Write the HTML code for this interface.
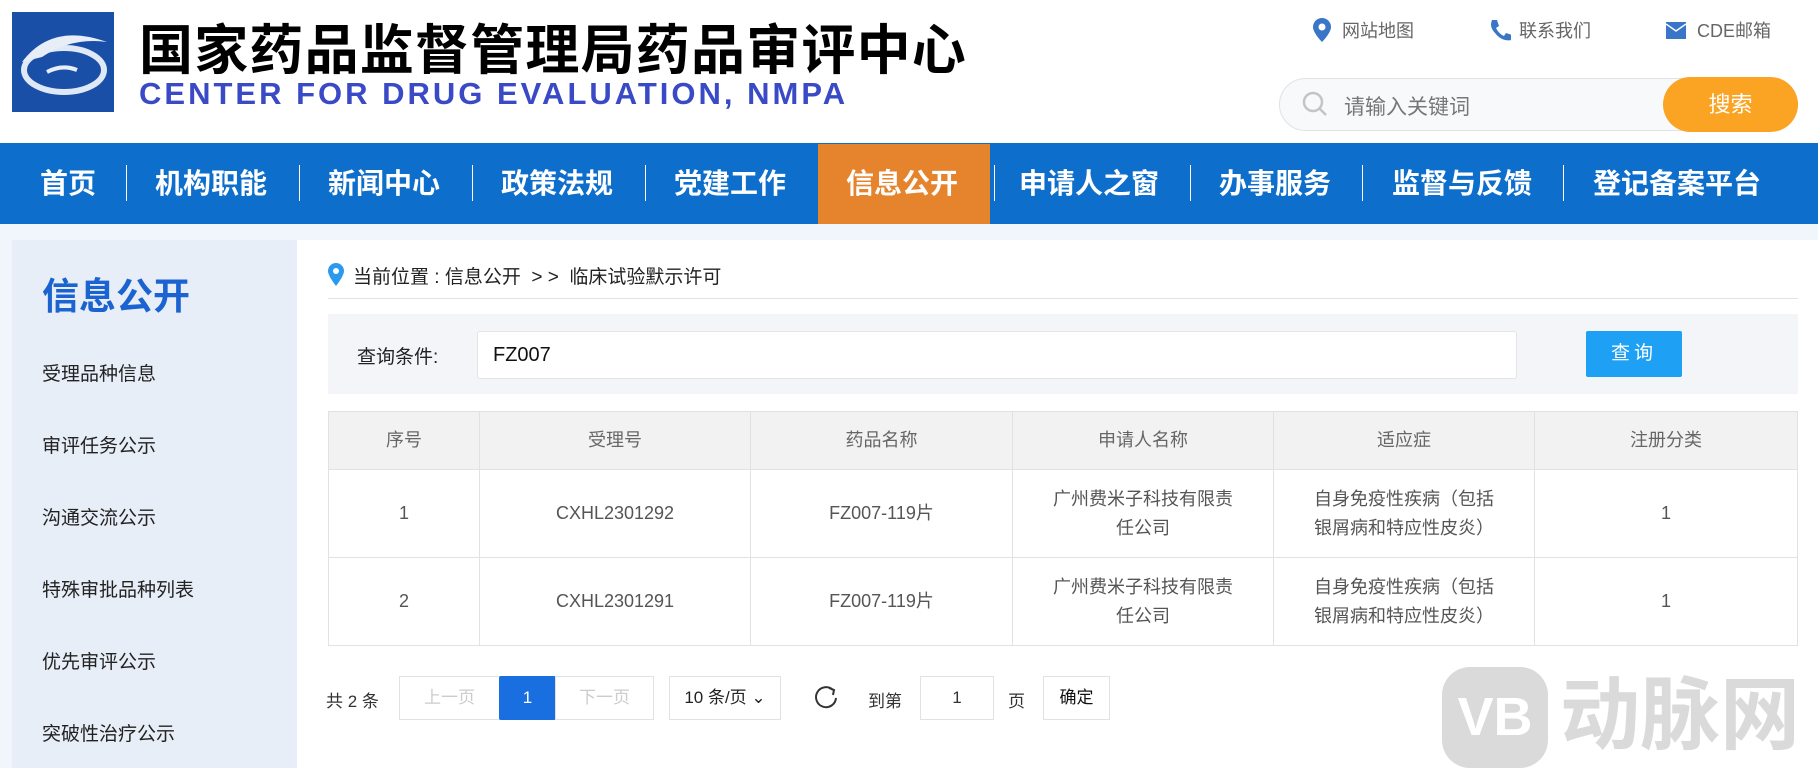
<!DOCTYPE html>
<html><head><meta charset="utf-8"><style>
*{margin:0;padding:0;box-sizing:border-box}
body{width:1818px;height:768px;overflow:hidden;background:#fff;font-family:"Liberation Sans","Noto Sans CJK SC",sans-serif;position:relative;color:#333}
.a{position:absolute;white-space:nowrap}
.nav{position:absolute;left:0;top:143px;width:1818px;height:81px;background:#0e6ecb}
.nav span{position:absolute;top:0;height:81px;line-height:81px;color:#fff;font-size:28px;font-weight:bold}
.sep{position:absolute;top:165px;width:1px;height:36px;background:#fff}
.side{position:absolute;left:12px;top:240px;width:285px;height:528px;background:#e7eef7}
.side div{position:absolute;left:30px;font-size:19px;color:#222}
table{position:absolute;left:328px;top:411px;width:1470px;border-collapse:collapse;font-size:18px;color:#555}
td,th{border:1px solid #e2e2e2;text-align:center;font-weight:normal;line-height:29px}
th{background:#f2f2f2;height:58px;color:#666}
td{height:88px}
.pb{position:absolute;top:676px;height:44px;border:1px solid #e2e2e2;background:#fff;line-height:42px;text-align:center;font-size:17px}
</style></head><body>
<div class="a" style="left:0;top:224px;width:1818px;height:16px;background:#f1f6fd"></div>
<div class="a" style="left:0;top:240px;width:12px;height:528px;background:#f1f6fd"></div>
<svg class="a" style="left:12px;top:12px" width="102" height="100" viewBox="0 0 102 100">
<rect width="102" height="100" fill="#1a4fa8"/>
<ellipse cx="52" cy="58" rx="40" ry="22" fill="none" stroke="#dfe8f5" stroke-width="6"/>
<path d="M10 50 Q40 10 95 30 Q60 25 30 45Z" fill="#e8eef8"/>
<path d="M35 60 Q50 52 65 58" stroke="#e8eef8" stroke-width="4" fill="none"/>
</svg>
<div class="a" style="left:139px;top:6px;font-size:54px;font-weight:bold;color:#000;letter-spacing:1.2px">国家药品监督管理局药品审评中心</div>
<div class="a" style="left:139px;top:76px;font-size:31px;font-weight:bold;color:#3a4ac6;letter-spacing:3px">CENTER FOR DRUG EVALUATION, NMPA</div>
<svg class="a" style="left:1313px;top:18px" width="18" height="24" viewBox="0 0 18 24"><path d="M9 0C4 0 0 4 0 9c0 6 9 15 9 15s9-9 9-15c0-5-4-9-9-9z" fill="#3a76c8"/><circle cx="9" cy="9" r="3.5" fill="#fff"/></svg>
<div class="a" style="left:1342px;top:17px;font-size:18px;color:#666">网站地图</div>
<svg class="a" style="left:1489px;top:18px" width="22" height="24" viewBox="0 0 22 24"><path d="M3 2l5 0 2 6-3 2q3 6 8 8l2-3 6 2 0 5q-10 2-17-7Q0 9 3 2z" fill="#3a76c8"/></svg>
<div class="a" style="left:1519px;top:17px;font-size:18px;color:#666">联系我们</div>
<svg class="a" style="left:1666px;top:22px" width="20" height="17" viewBox="0 0 20 17"><rect width="20" height="17" fill="#3a76c8"/><path d="M0 2l10 7 10-7" stroke="#fff" stroke-width="1.5" fill="none"/></svg>
<div class="a" style="left:1697px;top:17px;font-size:18px;color:#666">CDE邮箱</div>
<div class="a" style="left:1279px;top:78px;width:519px;height:53px;border:1px solid #e2e2e2;border-radius:27px;background:#f8f9fb"></div>
<svg class="a" style="left:1302px;top:91px" width="26" height="26" viewBox="0 0 26 26"><circle cx="11" cy="11" r="9" fill="none" stroke="#c4c4c4" stroke-width="2.5"/><path d="M18 18l6 6" stroke="#c4c4c4" stroke-width="2.5"/></svg>
<div class="a" style="left:1344px;top:91px;font-size:21px;color:#777">请输入关键词</div>
<div class="a" style="left:1663px;top:77px;width:135px;height:55px;border-radius:28px;background:#fba323;color:#fff;font-size:22px;text-align:center;line-height:55px">搜索</div>
<div class="nav">
<div style="position:absolute;left:818px;top:1px;width:172px;height:80px;background:#e5842c"></div>
<span style="left:40px">首页</span><span style="left:155px">机构职能</span><span style="left:328px">新闻中心</span><span style="left:501px">政策法规</span><span style="left:674px">党建工作</span><span style="left:846px">信息公开</span><span style="left:1019px">申请人之窗</span><span style="left:1219px">办事服务</span><span style="left:1392px">监督与反馈</span><span style="left:1593px">登记备案平台</span>
</div>
<div class="sep" style="left:126px"></div><div class="sep" style="left:299px"></div><div class="sep" style="left:472px"></div><div class="sep" style="left:645px"></div><div class="sep" style="left:994px"></div><div class="sep" style="left:1190px"></div><div class="sep" style="left:1362px"></div><div class="sep" style="left:1563px"></div>
<div class="side">
<div style="top:26px;font-size:37px;font-weight:bold;color:#1a63d0">信息公开</div>
<div style="top:119px">受理品种信息</div><div style="top:191px">审评任务公示</div><div style="top:263px">沟通交流公示</div><div style="top:335px">特殊审批品种列表</div><div style="top:407px">优先审评公示</div><div style="top:479px">突破性治疗公示</div>
</div>
<svg class="a" style="left:328px;top:263px" width="16" height="23" viewBox="0 0 16 23"><path d="M8 0C3.5 0 0 3.5 0 8c0 5 8 15 8 15s8-10 8-15c0-4.5-3.5-8-8-8z" fill="#2a9af0"/><circle cx="8" cy="8" r="3" fill="#fff"/></svg>
<div class="a" style="left:353px;top:262px;font-size:19px;color:#222">当前位置 : 信息公开 &nbsp;&gt; &gt; &nbsp;临床试验默示许可</div>
<div class="a" style="left:328px;top:298px;width:1470px;height:1px;background:#e2e2e2"></div>
<div class="a" style="left:328px;top:314px;width:1470px;height:80px;background:#f3f5f8"></div>
<div class="a" style="left:357px;top:342px;font-size:19px;color:#222">查询条件:</div>
<div class="a" style="left:477px;top:331px;width:1040px;height:48px;background:#fff;border:1px solid #e4e4e4;border-radius:3px;font-size:20px;color:#111;line-height:46px;padding-left:15px">FZ007</div>
<div class="a" style="left:1586px;top:331px;width:96px;height:46px;background:#1ea0f5;color:#fff;font-size:19px;text-align:center;line-height:46px;letter-spacing:4px;border-radius:2px">查询</div>
<table>
<tr><th style="width:151px">序号</th><th style="width:271px">受理号</th><th style="width:262px">药品名称</th><th style="width:261px">申请人名称</th><th style="width:261px">适应症</th><th>注册分类</th></tr>
<tr><td>1</td><td>CXHL2301292</td><td>FZ007-119片</td><td>广州费米子科技有限责<br>任公司</td><td>自身免疫性疾病（包括<br>银屑病和特应性皮炎）</td><td>1</td></tr>
<tr><td>2</td><td>CXHL2301291</td><td>FZ007-119片</td><td>广州费米子科技有限责<br>任公司</td><td>自身免疫性疾病（包括<br>银屑病和特应性皮炎）</td><td>1</td></tr>
</table>
<div class="a" style="left:326px;top:687px;font-size:17px;color:#333">共 2 条</div>
<div class="pb" style="left:399px;width:101px;color:#ccc">上一页</div>
<div class="pb" style="left:499px;width:57px;background:#1a6fe0;border-color:#1a6fe0;color:#fff;border-radius:2px">1</div>
<div class="pb" style="left:555px;width:99px;color:#ccc">下一页</div>
<div class="pb" style="left:669px;width:112px;color:#222">10 条/页 ⌄</div>
<svg class="a" style="left:813px;top:685px" width="26" height="26" viewBox="0 0 26 26"><path d="M20 5A10 10 0 1 0 23 13" fill="none" stroke="#333" stroke-width="2"/><path d="M16 3l5 2-1 5" fill="none" stroke="#333" stroke-width="2"/></svg>
<div class="a" style="left:868px;top:687px;font-size:17px;color:#333">到第</div>
<div class="pb" style="left:920px;width:74px;color:#333">1</div>
<div class="a" style="left:1008px;top:687px;font-size:17px;color:#333">页</div>
<div class="pb" style="left:1043px;width:67px;color:#111">确定</div>
<div class="a" style="left:1442px;top:667px;width:106px;height:101px;background:#dadada;border-radius:28px;color:#fff;font-size:54px;font-weight:bold;text-align:center;line-height:101px">VB</div>
<div class="a" style="left:1560px;top:668px;font-size:80px;font-weight:bold;color:#dadada;line-height:96px">动脉网</div>
</body></html>
